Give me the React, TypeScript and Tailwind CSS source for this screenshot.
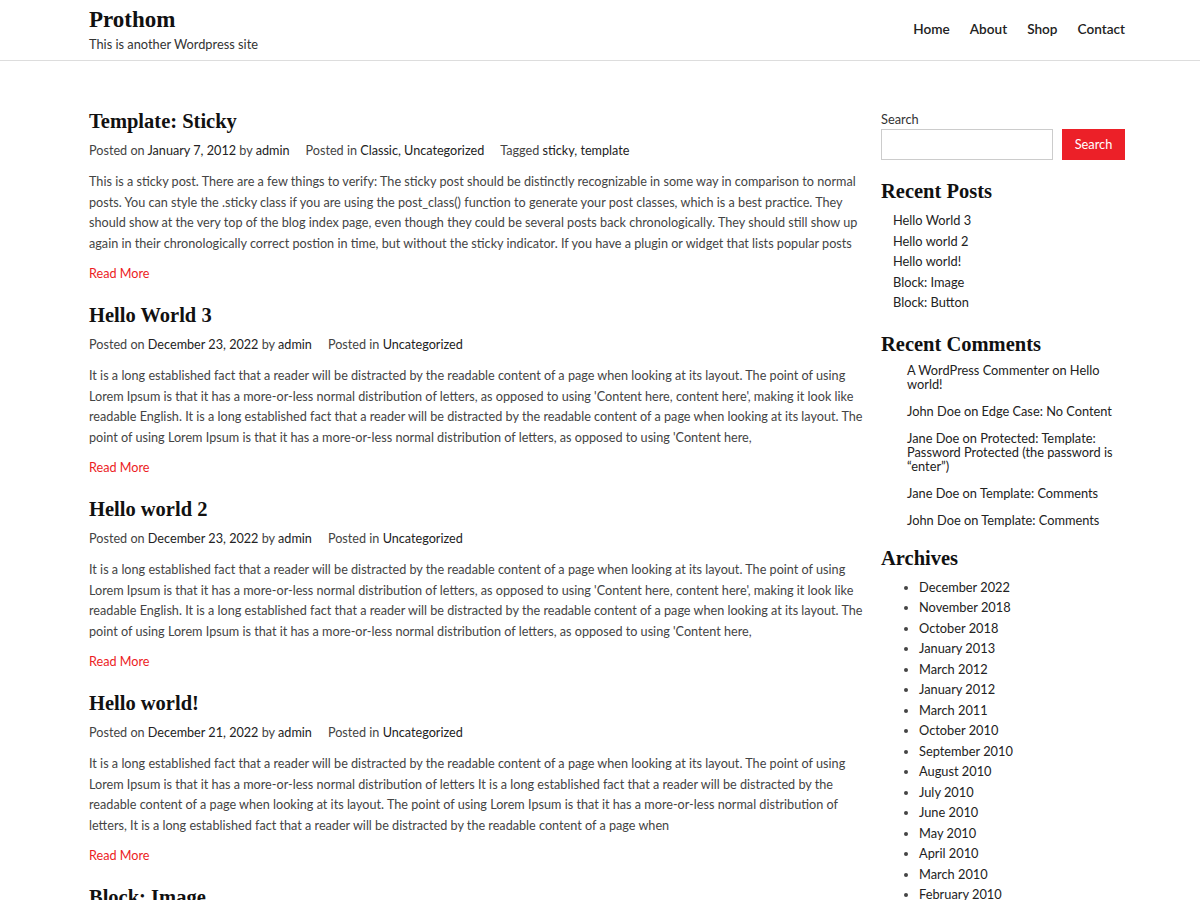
import React from "react";

const serif = "font-['Liberation_Serif','Times_New_Roman',serif]";

type Post = {
  title: string;
  date: string;
  cats: string;
  tags?: string;
  body: string;
};

const lorem =
  "It is a long established fact that a reader will be distracted by the readable content of a page when looking at its layout. The point of using Lorem Ipsum is that it has a more-or-less normal distribution of letters, as opposed to using 'Content here, content here', making it look like readable English. It is a long established fact that a reader will be distracted by the readable content of a page when looking at its layout. The point of using Lorem Ipsum is that it has a more-or-less normal distribution of letters, as opposed to using 'Content here,";

const posts: Post[] = [
  {
    title: "Template: Sticky",
    date: "January 7, 2012",
    cats: "Classic, Uncategorized",
    tags: "sticky, template",
    body: "This is a sticky post. There are a few things to verify: The sticky post should be distinctly recognizable in some way in comparison to normal posts. You can style the .sticky class if you are using the post_class() function to generate your post classes, which is a best practice. They should show at the very top of the blog index page, even though they could be several posts back chronologically. They should still show up again in their chronologically correct postion in time, but without the sticky indicator. If you have a plugin or widget that lists popular posts",
  },
  { title: "Hello World 3", date: "December 23, 2022", cats: "Uncategorized", body: lorem },
  { title: "Hello world 2", date: "December 23, 2022", cats: "Uncategorized", body: lorem },
  {
    title: "Hello world!",
    date: "December 21, 2022",
    cats: "Uncategorized",
    body: "It is a long established fact that a reader will be distracted by the readable content of a page when looking at its layout. The point of using Lorem Ipsum is that it has a more-or-less normal distribution of letters It is a long established fact that a reader will be distracted by the readable content of a page when looking at its layout. The point of using Lorem Ipsum is that it has a more-or-less normal distribution of letters, It is a long established fact that a reader will be distracted by the readable content of a page when",
  },
];

function PostItem({ p }: { p: Post }) {
  return (
    <article className="mb-[19px]">
      <h2 className={`${serif} text-[20.5px] font-bold leading-[24px] text-[#111]`}>{p.title}</h2>
      <div className="mt-[10px] flex gap-[16px] text-[12.65px] leading-[16px] text-[#444]">
        <span>
          Posted on <a className="text-[#222]">{p.date}</a> by <a className="text-[#222]">admin</a>
        </span>
        <span>
          Posted in <a className="text-[#222]">{p.cats}</a>
        </span>
        {p.tags && (
          <span>
            Tagged <a className="text-[#222]">{p.tags}</a>
          </span>
        )}
      </div>
      <p className="mt-[13px] text-[12.65px] leading-[20.5px] text-[#444]">{p.body}</p>
      <a className="mt-[10px] block text-[12.65px] leading-[20px] text-[#ec1c24]">Read More</a>
    </article>
  );
}

export default function App() {
  return (
    <div className="h-[900px] overflow-hidden bg-white font-['Lato','Liberation_Sans',sans-serif] text-[#333]">
      <header className="border-b border-[#dddddd]">
        <div className="ml-[89px] flex h-[60px] w-[1036px] items-start justify-between">
          <div className="pt-[6px]">
            <div className={`${serif} text-[23px] font-bold leading-[28px] text-[#111]`}>Prothom</div>
            <div className="text-[12.8px] leading-[20px] text-[#333]">This is another Wordpress site</div>
          </div>
          <nav className="flex gap-[20px] pt-[19px] text-[13.6px] font-semibold leading-[20px] text-[#222]">
            <a>Home</a>
            <a>About</a>
            <a>Shop</a>
            <a>Contact</a>
          </nav>
        </div>
      </header>
      <div className="ml-[89px] flex w-[1036px] pt-[48px]">
        <main className="w-[777px] shrink-0">
          {posts.map((p) => (
            <PostItem key={p.title} p={p} />
          ))}
          <h2 className={`${serif} text-[20.5px] font-bold leading-[24px] text-[#111]`}>Block: Image</h2>
        </main>
        <aside className="ml-[15px] w-[244px] pt-[1px] text-[12.8px] text-[#222]">
          <div className="text-[12.8px] leading-[18px] text-[#333]">Search</div>
          <div className="mt-[1px] flex gap-[9px]">
            <input className="h-[31px] w-[172px] border border-[#cccccc] bg-white px-2" />
            <button className="h-[31px] w-[64px] bg-[#ec2028] text-[12.8px] text-white">Search</button>
          </div>
          <h3 className={`${serif} mt-[18px] text-[20.5px] font-bold leading-[26px] text-[#111]`}>Recent Posts</h3>
          <ul className="mt-[6px] pl-[12px] leading-[20.5px]">
            <li>Hello World 3</li>
            <li>Hello world 2</li>
            <li>Hello world!</li>
            <li>Block: Image</li>
            <li>Block: Button</li>
          </ul>
          <h3 className={`${serif} mt-[18px] text-[20.5px] font-bold leading-[26px] text-[#111]`}>Recent Comments</h3>
          <ul className="mt-[6px] flex flex-col gap-[13px] pl-[26px] leading-[14px]">
            <li>A WordPress Commenter on Hello world!</li>
            <li>John Doe on Edge Case: No Content</li>
            <li>Jane Doe on Protected: Template: Password Protected (the password is “enter”)</li>
            <li>Jane Doe on Template: Comments</li>
            <li>John Doe on Template: Comments</li>
          </ul>
          <h3 className={`${serif} mt-[18px] text-[20.5px] font-bold leading-[26px] text-[#111]`}>Archives</h3>
          <ul className="mt-[6px] list-disc pl-[38px] leading-[20.5px] marker:text-[#444]">
            {[
              "December 2022",
              "November 2018",
              "October 2018",
              "January 2013",
              "March 2012",
              "January 2012",
              "March 2011",
              "October 2010",
              "September 2010",
              "August 2010",
              "July 2010",
              "June 2010",
              "May 2010",
              "April 2010",
              "March 2010",
              "February 2010",
            ].map((m) => (
              <li key={m}>{m}</li>
            ))}
          </ul>
        </aside>
      </div>
    </div>
  );
}
